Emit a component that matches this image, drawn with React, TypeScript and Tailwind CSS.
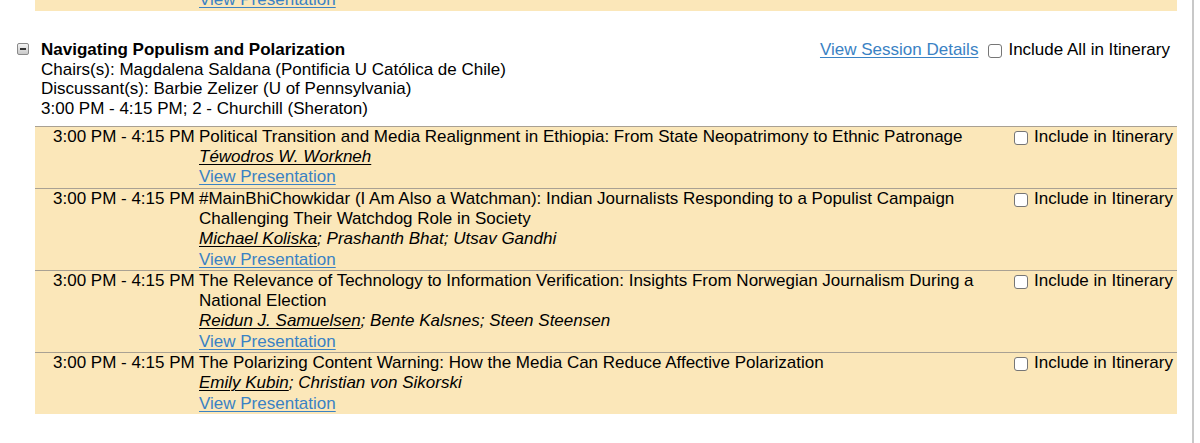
import React from 'react';

interface Paper {
  id: string;
  title: string;
  authors: { name: string; presenter?: boolean }[];
}

const PAPERS: Paper[] = [
  {
    id: 'P1',
    title: 'Political Transition and Media Realignment in Ethiopia: From State Neopatrimony to Ethnic Patronage',
    authors: [{ name: 'Téwodros W. Workneh', presenter: true }],
  },
  {
    id: 'P2',
    title: '#MainBhiChowkidar (I Am Also a Watchman): Indian Journalists Responding to a Populist Campaign Challenging Their Watchdog Role in Society',
    authors: [{ name: 'Michael Koliska', presenter: true }, { name: 'Prashanth Bhat' }, { name: 'Utsav Gandhi' }],
  },
  {
    id: 'P3',
    title: 'The Relevance of Technology to Information Verification: Insights From Norwegian Journalism During a National Election',
    authors: [{ name: 'Reidun J. Samuelsen', presenter: true }, { name: 'Bente Kalsnes' }, { name: 'Steen Steensen' }],
  },
  {
    id: 'P4',
    title: 'The Polarizing Content Warning: How the Media Can Reduce Affective Polarization',
    authors: [{ name: 'Emily Kubin', presenter: true }, { name: 'Christian von Sikorski' }],
  },
];

const Checkbox: React.FC = () => (
  <span className="inline-block w-[14px] h-[14px] rounded-[3px] border border-[#767676] bg-white shrink-0" />
);

const ViewLink: React.FC = () => (
  <a href="#" className="text-[#3a82c4] underline decoration-1 underline-offset-2">View Presentation</a>
);

const App: React.FC = () => {
  return (
    <div className="w-[1200px] h-[443px] overflow-hidden bg-white flex text-black text-[17px] leading-[20px] font-['Liberation_Sans',Arial,sans-serif]">
      <div className="w-[1194px] border-r-2 border-[#c8c8c8]">
        {/* tail of previous session */}
        <div className="ml-[35px] w-[1142px] h-[11px] overflow-hidden bg-[#fbe7b9]">
          <div className="pl-[164px] -mt-[10px]"><ViewLink /></div>
        </div>

        {/* session header */}
        <div className="flex mt-[29px] pr-[22px]">
          <div className="w-[41px] pl-[17px] pt-[3px]">
            <span className="flex items-center justify-center w-[12px] h-[12px] border border-[#8a8a8a] rounded-[2px] bg-gradient-to-b from-[#f4f4f4] to-[#c9c9c9]">
              <span className="w-[6px] h-[2px] bg-[#333]" />
            </span>
          </div>
          <div className="flex-1 leading-[19.7px]">
            <div className="font-bold">Navigating Populism and Polarization</div>
            <div>Chairs(s): Magdalena Saldana (Pontificia U Católica de Chile)</div>
            <div>Discussant(s): Barbie Zelizer (U of Pennsylvania)</div>
            <div>3:00 PM - 4:15 PM; 2 - Churchill (Sheraton)</div>
          </div>
          <div className="flex items-start gap-[6px] h-fit">
            <a href="#" className="text-[#3a82c4] underline decoration-1 underline-offset-2 mr-[4px]">View Session Details</a>
            <span className="mt-[3px]"><Checkbox /></span>
            <span>Include All in Itinerary</span>
          </div>
        </div>

        {/* papers */}
        <div className="ml-[35px] w-[1142px] mt-[7px] bg-[#fbe7b9] leading-[20.3px]">
          {PAPERS.map((p) => (
            <div key={p.id} className="flex border-t border-[#a9a193]">
              <div className="w-[164px] pl-[18px] whitespace-nowrap">3:00 PM - 4:15 PM</div>
              <div className="w-[811px]">
                <div>{p.title}</div>
                <div className="italic">
                  {p.authors.map((a, i) => (
                    <React.Fragment key={a.name}>
                      {i > 0 && '; '}
                      {a.presenter ? <span className="underline decoration-1 underline-offset-2">{a.name}</span> : a.name}
                    </React.Fragment>
                  ))}
                </div>
                <div><ViewLink /></div>
              </div>
              <div className="flex-1 flex items-start gap-[6px] pl-[4px]">
                <span className="mt-[3px]"><Checkbox /></span>
                <span className="whitespace-nowrap">Include in Itinerary</span>
              </div>
            </div>
          ))}
        </div>
      </div>
    </div>
  );
};

export default App;
